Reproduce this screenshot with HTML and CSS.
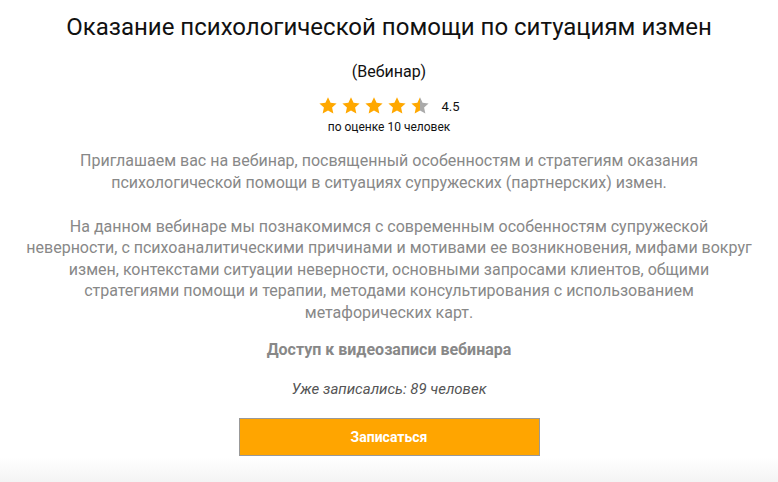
FILE: index.html
```html
<!DOCTYPE html>
<html lang="ru">
<head>
<meta charset="utf-8">
<link rel="stylesheet" href="styles.css">
</head>
<body>
<main class="page">
  <h1 class="title">Оказание психологической помощи по ситуациям измен</h1>
  <div class="kind">(Вебинар)</div>
  <div class="rating">
    <div class="rating-row">
      <div class="stars">
        <svg class="star" viewBox="0 0 24 24"><path d="M12 1.5l3.1 6.6 7.2.8-5.4 4.9 1.5 7.1L12 17.3l-6.4 3.6 1.5-7.1-5.4-4.9 7.2-.8z" fill="#ffa800"/></svg>
        <svg class="star" viewBox="0 0 24 24"><path d="M12 1.5l3.1 6.6 7.2.8-5.4 4.9 1.5 7.1L12 17.3l-6.4 3.6 1.5-7.1-5.4-4.9 7.2-.8z" fill="#ffa800"/></svg>
        <svg class="star" viewBox="0 0 24 24"><path d="M12 1.5l3.1 6.6 7.2.8-5.4 4.9 1.5 7.1L12 17.3l-6.4 3.6 1.5-7.1-5.4-4.9 7.2-.8z" fill="#ffa800"/></svg>
        <svg class="star" viewBox="0 0 24 24"><path d="M12 1.5l3.1 6.6 7.2.8-5.4 4.9 1.5 7.1L12 17.3l-6.4 3.6 1.5-7.1-5.4-4.9 7.2-.8z" fill="#ffa800"/></svg>
        <svg class="star" viewBox="0 0 24 24"><defs><clipPath id="lh"><rect x="0" y="0" width="12" height="24"/></clipPath><clipPath id="rh"><rect x="12" y="0" width="12" height="24"/></clipPath></defs><path clip-path="url(#rh)" d="M12 1.5l3.1 6.6 7.2.8-5.4 4.9 1.5 7.1L12 17.3l-6.4 3.6 1.5-7.1-5.4-4.9 7.2-.8z" fill="#aaaaaa"/><path clip-path="url(#lh)" d="M12 1.5l3.1 6.6 7.2.8-5.4 4.9 1.5 7.1L12 17.3l-6.4 3.6 1.5-7.1-5.4-4.9 7.2-.8z" fill="#ffa800"/></svg>
      </div>
      <span class="score">4.5</span>
    </div>
    <div class="votes">по оценке 10 человек</div>
  </div>
  <div class="desc">
    <p>Приглашаем вас на вебинар, посвященный особенностям и стратегиям оказания<br>психологической помощи в ситуациях супружеских (партнерских) измен.</p>
    <p>На данном вебинаре мы познакомимся с современным особенностям супружеской<br>неверности, с психоаналитическими причинами и мотивами ее возникновения, мифами вокруг<br>измен, контекстами ситуации неверности, основными запросами клиентов, общими<br>стратегиями помощи и терапии, методами консультирования с использованием<br>метафорических карт.</p>
  </div>
  <div class="access">Доступ к видеозаписи вебинара</div>
  <div class="count">Уже записались: 89 человек</div>
  <button class="cta">Записаться</button>
</main>
<div class="fade"></div>
</body>
</html>
```
FILE: styles.css
```css
html, body {
  margin: 0;
  padding: 0;
  background: #fff;
}
body {
  font-family: Roboto, "Noto Sans", Arial, sans-serif;
  height: 482px;
  overflow: hidden;
  display: flex;
  flex-direction: column;
}
.page {
  width: 770px;
  margin: 0 auto;
  display: flex;
  flex-direction: column;
  align-items: center;
  text-align: center;
  flex: 1;
}
.title {
  margin: 12px 0 0;
  font-size: 24px;
  font-weight: 400;
  line-height: 30px;
  color: #111;
  white-space: nowrap;
}
.kind {
  margin-top: 20px;
  font-size: 16px;
  line-height: 20px;
  color: #111;
}
.rating {
  margin-top: 14px;
  display: flex;
  flex-direction: column;
  align-items: center;
}
.rating-row {
  display: flex;
  align-items: center;
  gap: 11px;
}
.stars {
  display: flex;
  gap: 3px;
}
.star {
  width: 20px;
  height: 20px;
  display: block;
}
.score {
  font-size: 13px;
  color: #111;
}
.votes {
  margin-top: 4px;
  font-size: 12px;
  line-height: 14px;
  color: #111;
}
.desc {
  margin-top: 16px;
  color: #888;
  font-size: 16px;
  line-height: 21.5px;
}
.desc p {
  margin: 0 0 22.5px;
}
.desc p:last-child {
  margin-bottom: 0;
}
.access {
  margin-top: 17px;
  font-size: 16px;
  font-weight: 700;
  color: #888;
  line-height: 20px;
}
.count {
  margin-top: 20px;
  font-size: 15px;
  font-style: italic;
  color: #555;
  line-height: 18px;
}
.cta {
  margin-top: 20px;
  width: 301px;
  height: 38px;
  background: #ffa500;
  border: 1px solid #999;
  color: #fff;
  font-family: inherit;
  font-weight: 700;
  font-size: 14px;
  padding: 0;
}
.fade {
  height: 25px;
  background: linear-gradient(#fff, #f4f4f4);
}
```
